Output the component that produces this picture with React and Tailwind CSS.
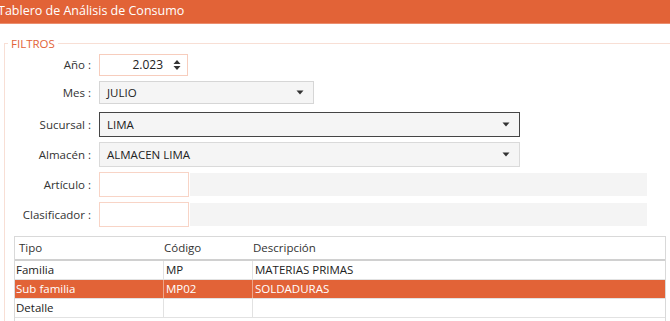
import React from "react";

const Caret = () => (
  <svg width="8" height="5" viewBox="0 0 8 5" className="shrink-0">
    <path d="M0.5 0.5 H7.5 L4 4.5 Z" fill="#333" />
  </svg>
);

const Spin = () => (
  <svg width="8" height="12" viewBox="0 0 8 12" className="shrink-0">
    <path d="M0.5 5 L4 1 L7.5 5 Z" fill="#333" />
    <path d="M0.5 7 H7.5 L4 11 Z" fill="#333" />
  </svg>
);

function Row({ label, children, className = "" }) {
  return (
    <div className={"flex items-center " + className}>
      <div className="w-[87px] shrink-0 text-right pr-[1px] text-[11.5px] text-[#333]">{label}</div>
      <div className="ml-[7px] flex items-center">{children}</div>
    </div>
  );
}

export default function App() {
  const font = { fontFamily: '"Open Sans", "Noto Sans", sans-serif' };
  return (
    <div className="w-[670px] h-[321px] overflow-hidden bg-white text-[#222]" style={font}>
      <div className="h-[24px] bg-[#E26337] border-b border-[#EB8E6E] flex items-center text-white text-[12.5px] pl-[0px] -ml-[2px]">
        <span className="-ml-[0px]">Tablero de Análisis de Consumo</span>
      </div>
      <fieldset className="mt-[13px] ml-[4px] border border-r-0 border-b-0 border-[#F8DFD5] pt-[2px] h-[300px]">
        <legend className="ml-[3px] px-[3px] text-[11.5px] text-[#E26337] leading-[13px]">FILTROS</legend>
        <Row label="Año :" className="mt-[2px]">
          <div className="w-[89px] h-[22px] border border-[#F7CDBD] bg-white flex items-center justify-end pr-[6px] gap-[10px] text-[12px]">
            <span>2.023</span>
            <Spin />
          </div>
        </Row>
        <Row label="Mes :" className="mt-[5px]">
          <div className="w-[215px] h-[23px] border border-[#D6D6D6] bg-[#F5F5F5] flex items-center justify-between pl-[7px] pr-[9px] text-[11.5px]">
            <span>JULIO</span>
            <Caret />
          </div>
        </Row>
        <Row label="Sucursal :" className="mt-[8px]">
          <div className="w-[421px] h-[25px] border border-[#454545] bg-[#F5F5F5] flex items-center justify-between pl-[7px] pr-[9px] text-[11.5px]">
            <span>LIMA</span>
            <Caret />
          </div>
        </Row>
        <Row label="Almacén :" className="mt-[5px]">
          <div className="w-[421px] h-[25px] border border-[#DADADA] bg-[#F5F5F5] flex items-center justify-between pl-[7px] pr-[9px] text-[11.5px]">
            <span>ALMACEN LIMA</span>
            <Caret />
          </div>
        </Row>
        <Row label="Artículo :" className="mt-[5px]">
          <div className="w-[90px] h-[25px] border border-[#F8D4C6] bg-white" />
          <div className="ml-[1px] w-[457px] h-[23px] bg-[#F4F4F4]" />
        </Row>
        <Row label="Clasificador :" className="mt-[5px]">
          <div className="w-[90px] h-[25px] border border-[#F8D4C6] bg-white" />
          <div className="ml-[1px] w-[457px] h-[23px] bg-[#F4F4F4]" />
        </Row>
        <div className="ml-[9px] mt-[9px] w-[652px] border border-[#D9D9D9] text-[11.5px]">
          <div className="flex h-[24px] items-center border-b-2 border-[#D0D0D0] text-[#333]">
            <div className="w-[149px] pl-[4px]">Tipo</div>
            <div className="w-[89px] pl-[0px]">Código</div>
            <div className="flex-1">Descripción</div>
          </div>
          <div className="flex h-[19px] items-center border-b border-[#E2E2E2]">
            <div className="w-[149px] pl-[1px] h-full flex items-center border-r border-[#E2E2E2]">Familia</div>
            <div className="w-[89px] pl-[2px] h-full flex items-center border-r border-[#E2E2E2]">MP</div>
            <div className="flex-1 pl-[2px]">MATERIAS PRIMAS</div>
          </div>
          <div className="flex h-[19px] items-center bg-[#E26337] text-white border-b border-[#E2E2E2]">
            <div className="w-[149px] pl-[1px] h-full flex items-center border-r border-[#EDA68C]">Sub familia</div>
            <div className="w-[89px] pl-[2px] h-full flex items-center border-r border-[#EDA68C]">MP02</div>
            <div className="flex-1 pl-[2px]">SOLDADURAS</div>
          </div>
          <div className="flex h-[19px] items-center border-b border-[#E2E2E2]">
            <div className="w-[149px] pl-[1px] h-full flex items-center border-r border-[#E2E2E2]">Detalle</div>
            <div className="w-[89px] pl-[2px] h-full flex items-center border-r border-[#E2E2E2]"></div>
            <div className="flex-1 pl-[2px]"></div>
          </div>
          <div className="h-[20px]" />
        </div>
      </fieldset>
    </div>
  );
}
